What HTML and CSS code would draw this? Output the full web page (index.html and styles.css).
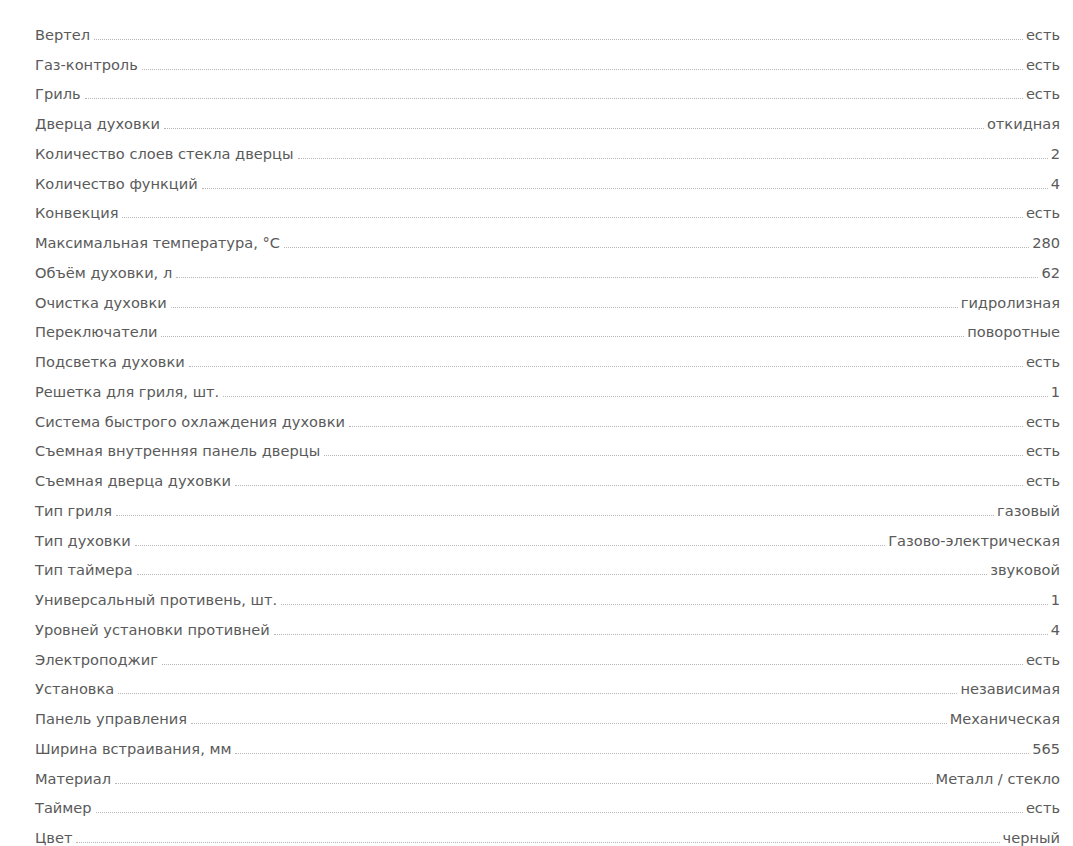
FILE: index.html
```html
<!DOCTYPE html>
<html lang="ru">
<head>
  <meta charset="UTF-8" />
  <meta name="viewport" content="width=device-width, initial-scale=1.0" />
  <title>Характеристики</title>
  <link rel="stylesheet" href="styles.css">
</head>
<body>
  <div class="specs">
    <div class="spec-row"><span class="spec-name">Вертел</span><span class="spec-dots"></span><span class="spec-value">есть</span></div>
    <div class="spec-row"><span class="spec-name">Газ-контроль</span><span class="spec-dots"></span><span class="spec-value">есть</span></div>
    <div class="spec-row"><span class="spec-name">Гриль</span><span class="spec-dots"></span><span class="spec-value">есть</span></div>
    <div class="spec-row"><span class="spec-name">Дверца духовки</span><span class="spec-dots"></span><span class="spec-value">откидная</span></div>
    <div class="spec-row"><span class="spec-name">Количество слоев стекла дверцы</span><span class="spec-dots"></span><span class="spec-value">2</span></div>
    <div class="spec-row"><span class="spec-name">Количество функций</span><span class="spec-dots"></span><span class="spec-value">4</span></div>
    <div class="spec-row"><span class="spec-name">Конвекция</span><span class="spec-dots"></span><span class="spec-value">есть</span></div>
    <div class="spec-row"><span class="spec-name">Максимальная температура, °C</span><span class="spec-dots"></span><span class="spec-value">280</span></div>
    <div class="spec-row"><span class="spec-name">Объём духовки, л</span><span class="spec-dots"></span><span class="spec-value">62</span></div>
    <div class="spec-row"><span class="spec-name">Очистка духовки</span><span class="spec-dots"></span><span class="spec-value">гидролизная</span></div>
    <div class="spec-row"><span class="spec-name">Переключатели</span><span class="spec-dots"></span><span class="spec-value">поворотные</span></div>
    <div class="spec-row"><span class="spec-name">Подсветка духовки</span><span class="spec-dots"></span><span class="spec-value">есть</span></div>
    <div class="spec-row"><span class="spec-name">Решетка для гриля, шт.</span><span class="spec-dots"></span><span class="spec-value">1</span></div>
    <div class="spec-row"><span class="spec-name">Система быстрого охлаждения духовки</span><span class="spec-dots"></span><span class="spec-value">есть</span></div>
    <div class="spec-row"><span class="spec-name">Съемная внутренняя панель дверцы</span><span class="spec-dots"></span><span class="spec-value">есть</span></div>
    <div class="spec-row"><span class="spec-name">Съемная дверца духовки</span><span class="spec-dots"></span><span class="spec-value">есть</span></div>
    <div class="spec-row"><span class="spec-name">Тип гриля</span><span class="spec-dots"></span><span class="spec-value">газовый</span></div>
    <div class="spec-row"><span class="spec-name">Тип духовки</span><span class="spec-dots"></span><span class="spec-value">Газово-электрическая</span></div>
    <div class="spec-row"><span class="spec-name">Тип таймера</span><span class="spec-dots"></span><span class="spec-value">звуковой</span></div>
    <div class="spec-row"><span class="spec-name">Универсальный противень, шт.</span><span class="spec-dots"></span><span class="spec-value">1</span></div>
    <div class="spec-row"><span class="spec-name">Уровней установки противней</span><span class="spec-dots"></span><span class="spec-value">4</span></div>
    <div class="spec-row"><span class="spec-name">Электроподжиг</span><span class="spec-dots"></span><span class="spec-value">есть</span></div>
    <div class="spec-row"><span class="spec-name">Установка</span><span class="spec-dots"></span><span class="spec-value">независимая</span></div>
    <div class="spec-row"><span class="spec-name">Панель управления</span><span class="spec-dots"></span><span class="spec-value">Механическая</span></div>
    <div class="spec-row"><span class="spec-name">Ширина встраивания, мм</span><span class="spec-dots"></span><span class="spec-value">565</span></div>
    <div class="spec-row"><span class="spec-name">Материал</span><span class="spec-dots"></span><span class="spec-value">Металл / стекло</span></div>
    <div class="spec-row"><span class="spec-name">Таймер</span><span class="spec-dots"></span><span class="spec-value">есть</span></div>
    <div class="spec-row"><span class="spec-name">Цвет</span><span class="spec-dots"></span><span class="spec-value">черный</span></div>
  </div>
</body>
</html>
```
FILE: styles.css
```css
body {
  margin: 0;
  padding: 0;
  background: #fff;
  color: #5a5a5a;
  font-family: 'DejaVu Sans', sans-serif;
  font-size: 14.6px;
}

.specs {
  padding: 19.5px 13px 0 35px;
}

.spec-row {
  display: flex;
  align-items: baseline;
  line-height: 21px;
  padding: 4.375px 0;
}

.spec-name,
.spec-value {
  white-space: nowrap;
}

.spec-dots {
  flex: 1;
  height: 0;
  margin: 0 3px 0 4px;
  border-bottom: 1px dotted #b5b5b5;
}
```
